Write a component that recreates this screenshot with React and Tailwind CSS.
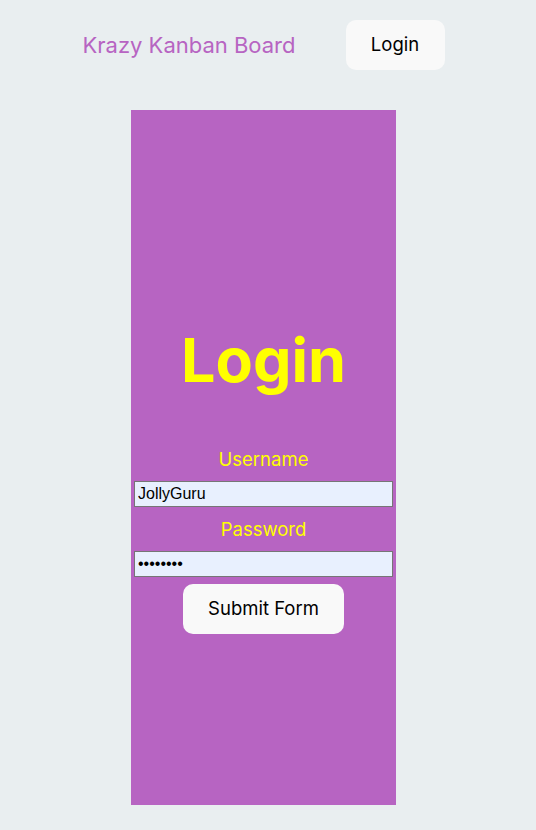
export default function App() {
  return (
    <div
      className="min-h-screen w-full bg-[#e9eef0]"
      style={{ fontFamily: "Inter, 'Noto Sans', sans-serif" }}
    >
      <div className="w-[527px] flex flex-col items-center">
        {/* Nav */}
        <header className="flex items-center gap-[50px] pt-[20px]">
          <h2 className="text-[22px] leading-[29px] font-normal text-[#b764c2]">
            Krazy Kanban Board
          </h2>
          <button className="w-[99px] h-[50px] rounded-[10px] bg-[#f9f9f9] text-[18.5px] text-black">
            Login
          </button>
        </header>

        {/* Login card */}
        <form
          className="mt-[40px] w-[265px] h-[695px] bg-[#b764c2] flex flex-col items-center px-[3px] pt-[210px]"
          onSubmit={(e) => e.preventDefault()}
        >
          <h1 className="text-[61px] leading-[80px] font-bold text-[#ffff00]">Login</h1>

          <label className="mt-[47px] text-[18.5px] leading-[24px] text-[#ffff00]">Username</label>
          <input
            type="text"
            defaultValue="JollyGuru"
            className="mt-[10px] w-full h-[26px] bg-[#e8f0fe] border border-[#767676] px-[3px] text-[16px] text-black"
            style={{ fontFamily: "'Liberation Sans', Arial, sans-serif" }}
          />

          <label className="mt-[10px] text-[18.5px] leading-[24px] text-[#ffff00]">Password</label>
          <input
            type="password"
            defaultValue="password"
            className="mt-[10px] w-full h-[26px] bg-[#e8f0fe] border border-[#767676] px-[3px] text-[16px] text-black"
            style={{ fontFamily: "'Liberation Sans', Arial, sans-serif" }}
          />

          <button
            type="submit"
            className="mt-[7px] w-[161px] h-[50px] rounded-[10px] bg-[#f9f9f9] text-[18.5px] text-black"
          >
            Submit Form
          </button>
        </form>
      </div>
    </div>
  );
}
